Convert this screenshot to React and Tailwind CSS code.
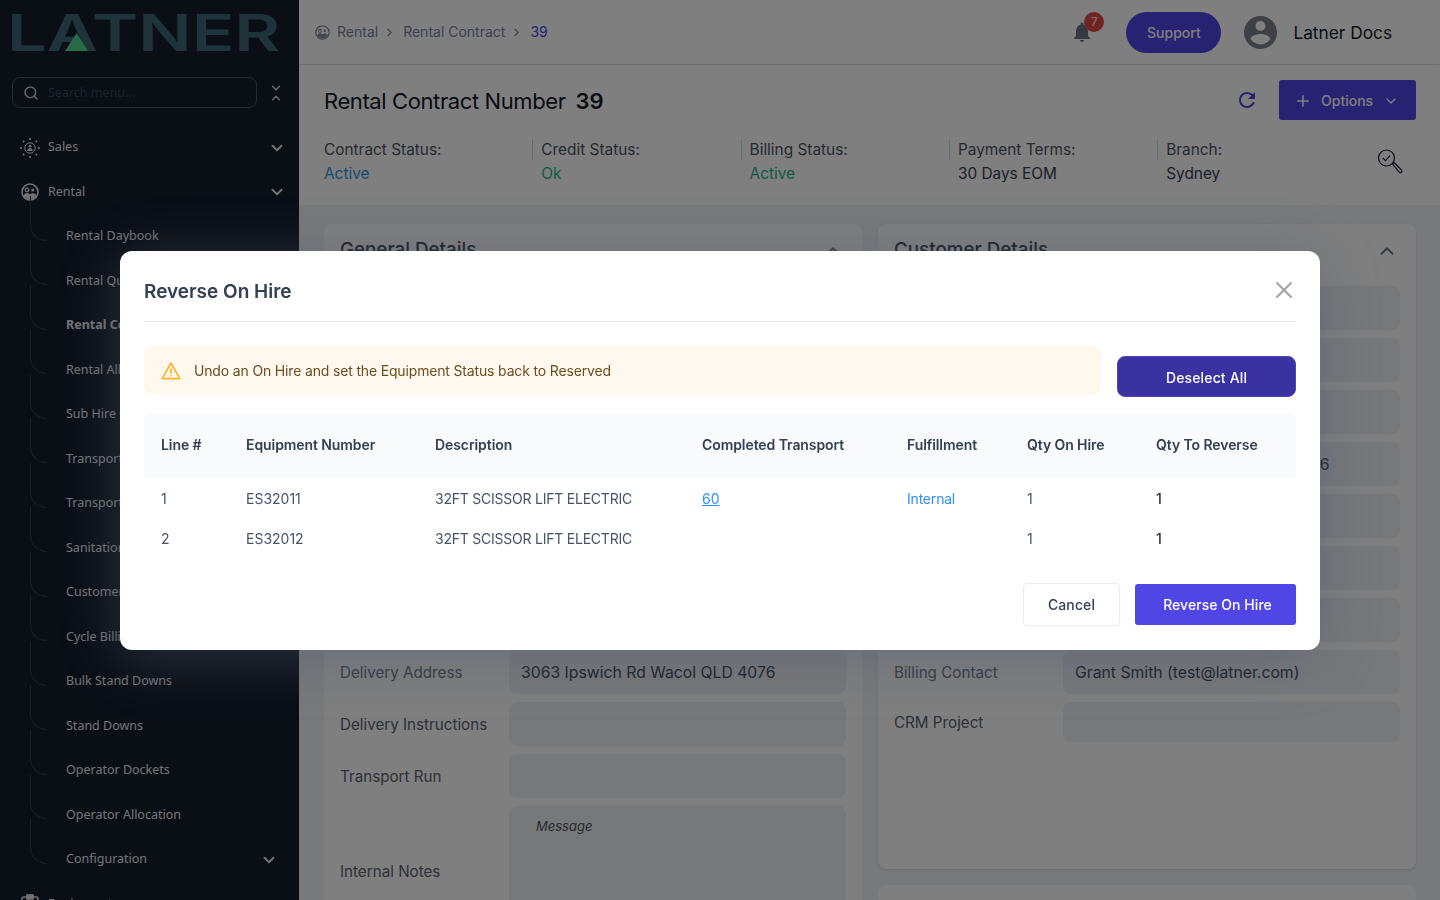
import { ChevronDown, ChevronUp, ChevronRight, Search, Plus, X } from 'lucide-react'

const subItems = [
  'Rental Daybook', 'Rental Quotes', 'Rental Contract', 'Rental Allocation', 'Sub Hire Orders',
  'Transport Jobs', 'Transport Runs', 'Sanitation', 'Customer Returns', 'Cycle Billing',
  'Bulk Stand Downs', 'Stand Downs', 'Operator Dockets', 'Operator Allocation', 'Configuration',
]

const statuses = [
  { label: 'Contract Status:', value: 'Active', color: 'text-[#2a97e0]' },
  { label: 'Credit Status:', value: 'Ok', color: 'text-[#1fb58f]' },
  { label: 'Billing Status:', value: 'Active', color: 'text-[#1fb58f]' },
  { label: 'Payment Terms:', value: '30 Days EOM', color: 'text-[#374151]' },
  { label: 'Branch:', value: 'Sydney', color: 'text-[#374151]' },
]

const leftRows = [
  { h: 'h-[44px]' }, { h: 'h-[44px]' }, { h: 'h-[44px]' }, { h: 'h-[44px]' },
  { h: 'h-[44px]' }, { h: 'h-[44px]' }, { h: 'h-[44px]' },
  { label: 'Delivery Address', value: '3063 Ipswich Rd Wacol QLD 4076', h: 'h-[44px]', soft: true },
  { label: 'Delivery Instructions', h: 'h-[44px]' },
  { label: 'Transport Run', h: 'h-[44px]' },
]

const rightRows = [
  { h: 'h-[44px]' }, { h: 'h-[44px]' }, { h: 'h-[44px]' },
  { value: '3063 Ipswich Rd Wacol QLD 4076', h: 'h-[44px]' },
  { h: 'h-[44px]' }, { h: 'h-[44px]' }, { h: 'h-[44px]' },
  { label: 'Billing Contact', value: 'Grant Smith (test@latner.com)', h: 'h-[44px]', soft: true },
  { label: 'CRM Project', h: 'h-[40px]' },
]

const SalesIcon = () => (
  <svg width="20" height="20" viewBox="0 0 20 20" fill="currentColor">
    <circle cx="10" cy="10" r="5.2" fill="none" stroke="currentColor" strokeWidth="1" />
    <circle cx="10" cy="8.2" r="1.4" />
    <path d="M7.2 13c.2-2 1.4-3 2.8-3s2.6 1 2.8 3z" />
    <circle cx="10" cy="1" r="1" /><circle cx="10" cy="19" r="1" />
    <circle cx="1" cy="10" r="1" /><circle cx="19" cy="10" r="1" />
    <circle cx="3.6" cy="3.6" r="1" /><circle cx="16.4" cy="3.6" r="1" />
    <circle cx="3.6" cy="16.4" r="1" /><circle cx="16.4" cy="16.4" r="1" />
  </svg>
)

const RentalIcon = ({ size = 18 }) => (
  <svg width={size} height={size} viewBox="0 0 18 18" fill="none">
    <circle cx="9" cy="9" r="8" stroke="currentColor" strokeWidth="1.6" />
    <circle cx="6" cy="7" r="1.8" stroke="currentColor" strokeWidth="1.3" />
    <circle cx="11.8" cy="7" r="1.5" fill="currentColor" />
    <path d="M2.5 13c.6-2 2-3 3.5-3s2.6.6 3 1.6c.8-1 1.8-1.4 2.8-1.4 1.4 0 2.7.6 3.7 1.8-1 2.6-3.6 4-6.5 4-2.5 0-5-1.2-6.5-3z" fill="currentColor" />
  </svg>
)

const BellIcon = () => (
  <svg width="24" height="24" viewBox="0 0 24 24" fill="#6b7280">
    <path d="M12 22c1.1 0 2-.9 2-2h-4c0 1.1.89 2 2 2zm6-6v-5c0-3.07-1.64-5.64-4.5-6.32V4c0-.83-.67-1.5-1.5-1.5s-1.5.67-1.5 1.5v.68C7.63 5.36 6 7.92 6 11v5l-2 2v1h16v-1l-2-2z" />
  </svg>
)

const AccountIcon = () => (
  <svg width="33" height="33" viewBox="2 2 20 20" fill="#7b8088">
    <path d="M12 2C6.48 2 2 6.48 2 12s4.48 10 10 10 10-4.48 10-10S17.52 2 12 2zm0 3c1.66 0 3 1.34 3 3s-1.34 3-3 3-3-1.34-3-3 1.34-3 3-3zm0 14.2c-2.5 0-4.71-1.28-6-3.22.03-1.99 4-3.08 6-3.08 1.99 0 5.97 1.09 6 3.08-1.29 1.94-3.5 3.22-6 3.22z" />
  </svg>
)

const RefreshIcon = () => (
  <svg width="24" height="24" viewBox="0 0 24 24" fill="#4f46e5">
    <path d="M17.65 6.35C16.2 4.9 14.21 4 12 4c-4.42 0-7.99 3.58-7.99 8s3.57 8 7.99 8c3.73 0 6.84-2.55 7.73-6h-2.08c-.82 2.33-3.04 4-5.65 4-3.31 0-6-2.69-6-6s2.69-6 6-6c1.66 0 3.14.69 4.22 1.78L13 11h7V4l-2.35 2.35z" />
  </svg>
)

const InspectIcon = () => (
  <svg width="30" height="30" viewBox="0 0 30 30" fill="none" stroke="#111827" strokeWidth="1.2">
    <circle cx="10.5" cy="11" r="8" />
    <path d="M6.8 11l2.6 2.6 4.6-5" />
    <path d="M16.5 16.8l1.7-1.2 7.4 7.6a1.6 1.6 0 0 1-2.3 2.2z" />
  </svg>
)

const WarnIcon = () => (
  <svg width="20" height="20" viewBox="0 0 20 20" fill="none" stroke="#fdb022" strokeWidth="1.6" strokeLinejoin="round" strokeLinecap="round">
    <path d="M10 2L1.2 17.6h17.6z" />
    <path d="M10 8v4.2" />
    <path d="M10 14.8v.2" />
  </svg>
)

function Logo() {
  return (
    <div className="relative h-[66px] overflow-hidden pl-[7px] pt-[3px]">
      <span className="block origin-left scale-x-[1.38] whitespace-nowrap font-['Inter',sans-serif] text-[51px] leading-[60px] font-semibold text-[#3e6774]">LATNER</span>
      <svg className="absolute left-[65px] top-[33px]" width="23" height="18" viewBox="0 0 23 18">
        <path d="M11.5 0L23 18H0z" fill="#4fd98f" />
      </svg>
    </div>
  )
}

function Sidebar() {
  return (
    <aside className="h-full w-[299px] shrink-0 bg-[#141c2b] font-['Noto_Sans',sans-serif] text-[12.5px] text-[#e5e7eb]">
      <Logo />
      <div className="mt-[11px] flex items-center">
        <div className="ml-3 flex h-[31px] w-[245px] items-center gap-[9px] rounded-lg border border-[#4c5261] pl-[10px]">
          <Search size={16} strokeWidth={2.2} className="text-[#c9ccd3]" />
          <span className="pt-px text-[#3d4759]">Search menu...</span>
        </div>
        <div className="ml-3 flex flex-col text-[#d1d5db]">
          <ChevronDown size={14} strokeWidth={2.5} className="-mb-[2px]" />
          <ChevronUp size={14} strokeWidth={2.5} className="-mt-[2px]" />
        </div>
      </div>
      <nav className="mt-[17.3px]">
        <div className="flex h-[44.5px] items-center pl-5 pr-[13px]">
          <SalesIcon />
          <span className="ml-2 flex-1">Sales</span>
          <ChevronDown size={18} strokeWidth={2.5} />
        </div>
        <div className="flex h-[44.5px] items-center pl-[21px] pr-[13px]">
          <RentalIcon />
          <span className="ml-[9px] flex-1">Rental</span>
          <ChevronDown size={18} strokeWidth={2.5} />
        </div>
        {subItems.map((item) => (
          <div key={item} className="relative flex h-[44.5px] items-center pl-[66px] pr-[21px]">
            <span className="absolute left-[30px] bottom-[18px] h-[45px] w-[17px] rounded-bl-[16px] border-b border-l border-[#353c4b]" />
            <span className={item === 'Rental Contract' ? 'flex-1 font-bold' : 'flex-1'}>{item}</span>
            {item === 'Configuration' && <ChevronDown size={18} strokeWidth={2.5} />}
          </div>
        ))}
        <div className="flex h-[44.5px] items-center pl-[21px]">
          <svg width="18" height="20" viewBox="0 0 18 20" fill="none" stroke="currentColor" strokeWidth="1.6">
            <rect x="1" y="3" width="16" height="16" rx="2" />
            <rect x="6" y="1" width="6" height="4" fill="currentColor" />
          </svg>
          <span className="ml-[9px]">Equipment</span>
        </div>
      </nav>
    </aside>
  )
}

function Header() {
  return (
    <header className="flex h-[65px] shrink-0 items-center border-b border-[#e2e5ee] bg-white pl-4 pr-12 text-sm">
      <span className="text-[#8a8f99]"><RentalIcon size={15} /></span>
      <span className="ml-[7px] text-[#7b8494]">Rental</span>
      <ChevronRight size={13} className="mx-[5px] text-[#7b8494]" />
      <span className="ml-[2px] text-[#7b8494]">Rental Contract</span>
      <ChevronRight size={13} className="mx-[5px] text-[#7b8494]" />
      <span className="ml-[2px] text-[#4f46e5]">39</span>
      <div className="relative ml-auto mr-[32px]">
        <BellIcon />
        <span className="absolute -right-[10px] -top-[8px] flex h-5 w-5 items-center justify-center rounded-full bg-[#e04848] text-xs text-white/90">7</span>
      </div>
      <button className="flex h-[41px] w-[95px] items-center justify-center rounded-full bg-[#4f46e5] pt-px text-sm font-medium text-white">Support</button>
      <span className="ml-[23px]"><AccountIcon /></span>
      <span className="ml-4 pt-[2px] text-[17.3px] text-[#111827]">Latner Docs</span>
    </header>
  )
}

function TitlePanel() {
  return (
    <section className="h-[140px] shrink-0 bg-white pl-[25px] pr-6 shadow-sm">
      <div className="flex h-[70px] items-center">
        <h1 className="pt-[2px] text-[22px] tracking-[-0.4px] text-[#111827]">Rental Contract Number<span className="ml-[10px] font-semibold tracking-normal">39</span></h1>
        <span className="ml-auto mr-5"><RefreshIcon /></span>
        <button className="flex h-[40px] w-[137px] items-center rounded-[3px] bg-[#4f46e5] pl-[15px] pt-px text-sm font-medium text-white">
          <Plus size={18} className="mr-[9px]" />
          Options
          <ChevronDown size={16} className="ml-[10px]" />
        </button>
      </div>
      <div className="mt-[3px] flex items-start text-[15.4px] leading-[24px]">
        {statuses.map((s, i) => (
          <div key={s.label} className="flex h-[48px] w-[208.3px]">
            {i > 0 && <span className="mr-2 mt-[2px] h-5 w-px bg-[#d0d3d9]" />}
            <div>
              <div className="text-[#4b5563]">{s.label}</div>
              <div className={s.color}>{s.value}</div>
            </div>
          </div>
        ))}
        <span className="ml-auto mr-[10px] mt-[9px]"><InspectIcon /></span>
      </div>
    </section>
  )
}

function Field({ label, value, h, soft }) {
  return (
    <div className="flex items-center text-[15.2px]">
      <div className={`w-[169px] shrink-0 pt-[3px] ${soft ? 'text-[#6b7280]' : 'text-[#5b6270]'}`}>{label}</div>
      <div className={`${h} flex w-[337px] items-center rounded-lg bg-[#eef0f4] px-3 pt-px text-[15.75px] text-[#374151]`}>{value}</div>
    </div>
  )
}

function CardHead({ title }) {
  return (
    <div className="flex h-[62px] items-center justify-between pb-[9px] pr-[2px]">
      <h2 className="text-[18.8px] font-medium text-[#374151]">{title}</h2>
      <ChevronUp size={22} className="text-[#6b7280]" />
    </div>
  )
}

function Content() {
  return (
    <main className="flex flex-1 gap-4 overflow-hidden bg-[#f1f2f5] pl-[25px] pr-6 pt-[19px]">
      <div className="w-[538px] shrink-0">
        <div className="h-[900px] rounded-lg bg-white px-4">
          <CardHead title="General Details" />
          <div className="flex flex-col gap-2">
            {leftRows.map((r, i) => <Field key={i} {...r} />)}
            <div className="flex items-center text-[15.2px]">
              <div className="w-[169px] shrink-0 pt-[3px] text-[#5b6270]">Internal Notes</div>
              <div className="h-[130px] w-[337px] rounded-lg bg-[#eef0f4] pl-[27px] pt-[11px] text-[13px] italic text-[#4b5563]">Message</div>
            </div>
          </div>
        </div>
      </div>
      <div className="w-[538px] shrink-0">
        <div className="h-[645px] rounded-lg bg-white px-4 shadow-sm">
          <CardHead title="Customer Details" />
          <div className="flex flex-col gap-2">
            {rightRows.map((r, i) => <Field key={i} {...r} />)}
          </div>
        </div>
        <div className="mt-4 h-40 rounded-lg bg-white" />
      </div>
    </main>
  )
}

function ReverseModal() {
  const head = ['Line #', 'Equipment Number', 'Description', 'Completed Transport', 'Fulfillment', 'Qty On Hire', 'Qty To Reverse']
  const widths = ['w-[85px]', 'w-[189px]', 'w-[267px]', 'w-[205px]', 'w-[120px]', 'w-[129px]', 'w-[157px]']
  return (
    <div className="fixed inset-0 flex justify-center bg-black/50 pt-[251px]">
      <div className="h-[399px] w-[1200px] rounded-xl bg-white px-6 shadow-[0_8px_60px_rgba(80,90,110,0.5)]">
        <div className="flex h-[71px] items-center justify-between border-b border-[#e5e7eb] pt-[9px]">
          <h3 className="pt-[4px] text-[19px] font-semibold text-[#344054]">Reverse On Hire</h3>
          <X size={28} strokeWidth={1.8} className="-mr-[2px] -mt-[2px] text-[#a3a3a3]" />
        </div>
        <div className="mt-[24px] flex items-start gap-4">
          <div className="flex h-[49px] w-[957px] items-center rounded-lg bg-[#fff8ef] pl-[17px] text-sm tracking-[-0.16px] text-[#6b4e1f]">
            <WarnIcon />
            <span className="ml-[13px]">Undo an On Hire and set the Equipment Status back to Reserved</span>
          </div>
          <button className="mt-[10px] h-[41px] w-[179px] rounded-lg border border-[#4f46b5] bg-[#3a32a0] pt-[2px] text-sm font-medium tracking-[0.15px] text-white">Deselect All</button>
        </div>
        <table className="mt-[16px] w-[1152px] table-fixed text-sm">
          <thead>
            <tr className="h-[64px] bg-[#f9fafb] text-left tracking-[-0.08px] text-[#344054]">
              {head.map((h, i) => (
                <th key={h} className={`${widths[i]} pl-[17px] font-semibold ${i === 0 ? 'rounded-tl-lg' : ''} ${i === 6 ? 'rounded-tr-lg' : ''}`}>{h}</th>
              ))}
            </tr>
          </thead>
          <tbody className="text-[#475467] [&_td]:pt-px">
            <tr className="h-[42px]">
              <td className="pl-[17px]">1</td>
              <td className="pl-[17px]">ES32011</td>
              <td className="pl-[17px] tracking-[-0.23px]">32FT SCISSOR LIFT ELECTRIC</td>
              <td className="pl-[17px] text-[#2e90fa] underline">60</td>
              <td className="pl-[17px] tracking-[-0.2px] text-[#2e90fa]">Internal</td>
              <td className="pl-[17px]">1</td>
              <td className="pl-[17px] font-medium text-[#1f2937]">1</td>
            </tr>
            <tr className="h-[38px]">
              <td className="pl-[17px]">2</td>
              <td className="pl-[17px]">ES32012</td>
              <td className="pl-[17px] tracking-[-0.23px]">32FT SCISSOR LIFT ELECTRIC</td>
              <td className="pl-[17px]" />
              <td className="pl-[17px]" />
              <td className="pl-[17px]">1</td>
              <td className="pl-[17px] font-medium text-[#1f2937]">1</td>
            </tr>
          </tbody>
        </table>
        <div className="mt-[26px] flex items-center justify-end gap-[15px]">
          <button className="h-[43px] w-[97px] rounded-[4px] border border-[#eaecf0] bg-white text-sm font-medium tracking-[0.1px] text-[#344054]">Cancel</button>
          <button className="h-[41px] w-[161px] rounded-[3px] bg-[#4f46e5] pl-1 text-sm font-medium tracking-[0.05px] text-white">Reverse On Hire</button>
        </div>
      </div>
    </div>
  )
}

export default function App() {
  return (
    <div className="flex h-screen overflow-hidden font-['Inter',sans-serif]">
      <Sidebar />
      <div className="flex min-w-0 flex-1 flex-col">
        <Header />
        <TitlePanel />
        <Content />
      </div>
      <ReverseModal />
    </div>
  )
}
